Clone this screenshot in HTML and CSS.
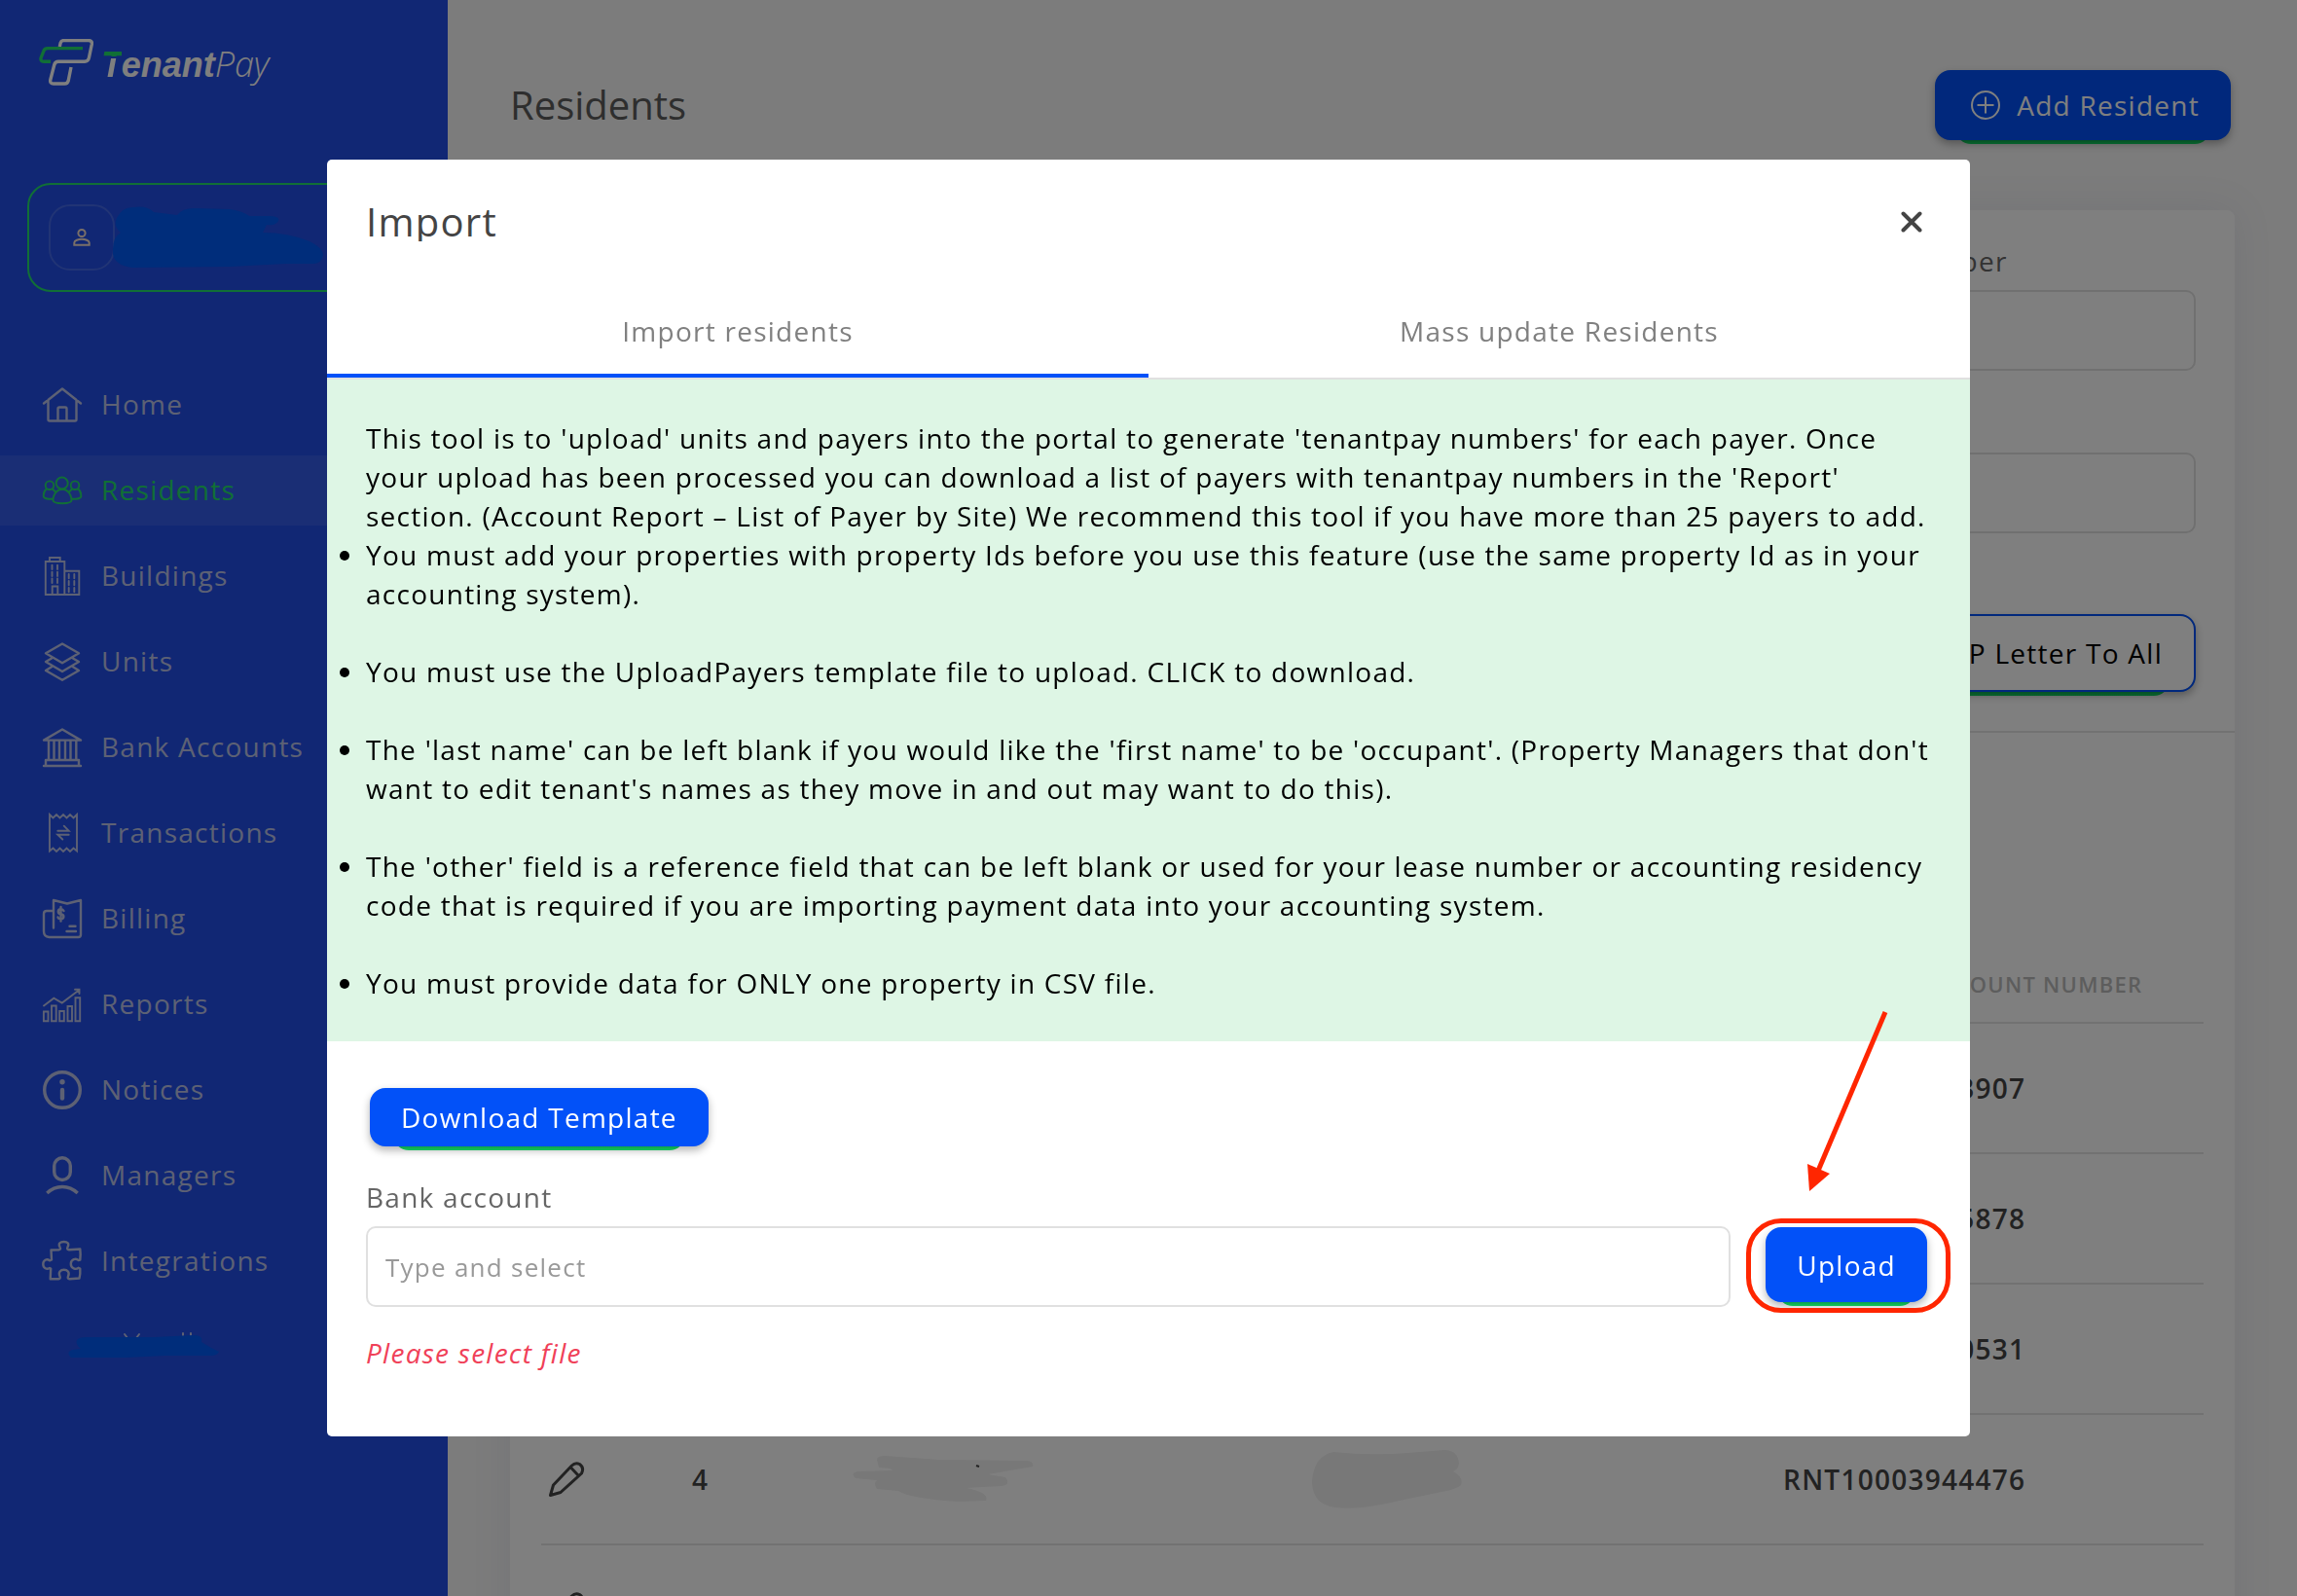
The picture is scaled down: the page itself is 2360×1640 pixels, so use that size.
FILE: index.html
```html
<!DOCTYPE html>
<html lang="en">
<head>
  <meta charset="utf-8">
  <meta name="viewport" content="width=device-width, initial-scale=1">
  <title>Residents - TenantPay</title>
  <link rel="stylesheet" href="styles.css">
</head>
<body>
  <div class="app">
    <aside class="sidebar">
      <a class="logo" href="#" aria-label="TenantPay">
        <svg class="logo-mark" viewBox="0 0 56 48" aria-hidden="true">
          <path class="logo-white" d="M21.3 8 22.2 4Q23 1.6 25.5 1.6H51Q55 1.6 54.3 5.5L51.4 19.5Q50.6 23.2 47 23.2H20Q16.6 23.2 15.8 26.5L11.8 42Q11 46 15 46H26.5Q29.4 46 30.2 43L33 29"/>
          <path class="logo-green" d="M45 9.6H9Q5.6 9.6 4.8 12.5L2.2 19.2Q1.2 23.2 5 23.2H12"/>
        </svg>
        <span class="logo-text"><b><span class="logo-t">T</span>enant</b><i>Pay</i></span>
      </a>

      <button class="account" type="button" aria-label="Account">
        <span class="avatar">
          <svg viewBox="0 0 20 20" aria-hidden="true"><circle cx="10" cy="5.5" r="3.6"/><path d="M2.3 17.8V15.5C2.3 13.2 6.5 11.8 10 11.8S17.700 13.2 17.700 15.5V17.800Z"/></svg>
        </span>
        <svg class="account-mark" viewBox="0 0 218 64" aria-hidden="true"><path d="M4 12Q10 0 22 1 34-1 42 6L66 9Q72 1 86 2L120 3Q134 5 140 10H160Q172 10 170 15T158 19L154 27Q180 27 202 36 216 43 216 50 214 60 204 59H178L120 62 20 63Q-2 60 0 44 0 32 8 27 0 20 4 12Z"/></svg>
      </button>

      <nav class="nav">
        <a href="#"><svg viewBox="0 0 40 40" aria-hidden="true"><path d="M1 18.500 20 3.500 39 18.500M5.500 15V35Q5.500 36.500 7 36.500H33Q34.500 36.500 34.500 35V15M15.500 36V24Q15.500 22.500 17 22.500H23Q24.500 22.500 24.500 24V36"/></svg><span>Home</span></a>
        <a href="#" class="active" aria-current="page"><svg class="thin" viewBox="0 0 40 40" aria-hidden="true"><circle cx="19.700" cy="12.500" r="6"/><circle cx="7" cy="14.700" r="4.300"/><circle cx="33" cy="14.700" r="4.300"/><path d="M20 18.700C14 18.700 10.500 25 10.500 30Q10.500 33.200 20 33.200T29.500 30C29.500 25 26 18.700 20 18.700ZM3.800 18.500C0 21 .8 24 .8 26.500Q2 29 10.300 28.800M10 18.500 12.500 21M36.200 18.500C40 21 39.200 24 39.200 26.500Q38 29 29.700 28.800M30 18.500 27.500 21"/></svg><span>Residents</span></a>
        <a href="#"><svg class="thin" viewBox="0 0 40 40" aria-hidden="true"><path d="M2.800 5H22.300V39H2.800ZM7 5V1H17.700V5M22.300 14.700H37.300V39H22.300M9.700 39V30.500H15.300V39M9.500 8.700V13M15 8.700V13M9.500 15.700V20M15 15.700V20M9.500 22.500V27M15 22.500V27M26.700 18V22.300M32.300 18V22.300M26.700 25V29.300M32.300 25V29.300M26.700 32V36.300M32.300 32V36.300"/></svg><span>Buildings</span></a>
        <a href="#"><svg viewBox="0 0 40 40" aria-hidden="true"><path d="M20 1.500 37 11.300 20 21.300 3 11.300ZM9 16.500 3 20 20 30 37 20 31 16.500M9 25.300 3 29 20 38.700 37 29 31 25.300"/></svg><span>Units</span></a>
        <a href="#"><svg viewBox="0 0 40 40" aria-hidden="true"><path d="M1 12.600 20 1.500 39 12.600ZM6 13V32M11.500 13V32M17 13V32M23 13V32M28.500 13V32M34.300 13V32M3 38V33H37V38M1 39H39"/></svg><span>Bank Accounts</span></a>
        <a href="#"><svg class="thin" viewBox="0 0 40 40" aria-hidden="true"><path d="M7 38.500V1L10.500 4.500 14 1 17.500 4.500 21 1 24.500 4.500 28 1 31.500 4.500 35 1V38.500L31.500 35.500 28 39 24.500 35.500 21 39 17.500 35.500 14 39 10.500 35.500ZM15.300 17.700H26.700L21.700 12.700M26.700 21.700H15.300L20.300 26.500"/></svg><span>Transactions</span></a>
        <a href="#"><svg viewBox="0 0 40 40" aria-hidden="true"><path d="M11 29.500V1L25 4.500 39 1V36.500Q39 39 36.500 39H6.500Q1 38.500 1 33V15Q1 12 4 12H11M27.500 27.700H33.500M24.500 33H34M21.500 12Q20.500 10.300 18.500 10.300 15.700 10.500 15.800 12.800 16 15 18.500 15.300 21.300 15.700 21.400 18 21.300 20.300 18.500 20.500 16 20.300 15.500 18.500M18.500 8V22.500"/></svg><span>Billing</span></a>
        <a href="#"><svg class="thin" viewBox="0 0 40 40" aria-hidden="true"><path d="M1 21.500 11.300 13.700 19.700 18.500 37 5.500M33 4.700H37.500V9M.9 27.500H5.500V37.300H.9ZM9 21.500H13.700V37.300H9ZM17.200 27H21.800V37.300H17.200ZM25.500 22H30V37.300H25.500ZM33.500 13.300H38.200V37.300H33.500Z"/></svg><span>Reports</span></a>
        <a href="#"><svg viewBox="0 0 40 40" aria-hidden="true"><circle class="bold" cx="20" cy="20" r="18.300"/><circle class="fill" cx="20" cy="11.700" r="2.700"/><path class="heavy" d="M20 20V28.500"/></svg><span>Notices</span></a>
        <a href="#"><svg viewBox="0 0 40 40" aria-hidden="true"><rect class="bold" x="11.700" y="1.800" width="16.600" height="22.700" rx="8.300"/><path class="bold" d="M4.300 38Q11 31.500 20 31.500T35.700 38"/></svg><span>Managers</span></a>
        <a href="#"><svg viewBox="0 0 40 40" aria-hidden="true"><path d="M8.500 8.500 16.500 8.300Q19 8 17.500 5.500C15.500 1.500 18 0 21.600 0S27.500 1.500 25.500 5.500Q24.300 8 27 8.300L38.300 7.500Q39 13 38.300 18.500L36.500 19C34 16.500 28.800 18 28.800 22.800S34 29 36.500 26.800L38.300 27.500Q38.700 33 37.500 37.500L27.500 38.300Q25 38 26 35.500C28 31 25 28.800 21.700 28.800S15.500 31 17.500 35.500Q18.500 38 16 38.300L7.700 38.300 8.200 27.500 7 27C4 29 .3 27 .3 23S4 17 7 19.300L9 18.500Z"/></svg><span>Integrations</span></a>
        <a href="#" class="masked" aria-label="More"><svg class="nav-mark" viewBox="0 0 156 26" aria-hidden="true"><path class="nav-hint" d="M59 0 62 4M74 0 71 4M119-1V1M127-1V1"/><path d="M10 6Q12 3 20 3L90 3 130 1Q140 1 138 8L148 14 156 18Q154 22 148 22L100 22 60 24H4Q-2 18 6 16L14 15Q8 10 10 6Z"/></svg></a>
      </nav>
    </aside>

    <main class="main">
      <header class="page-head">
        <h1>Residents</h1>
        <button class="btn btn-add" type="button">
          <svg viewBox="0 0 30 30" aria-hidden="true"><circle cx="15" cy="15" r="14"/><path d="M15 6.500V23.500M6.500 15H23.500"/></svg>
          Add Resident
        </button>
      </header>

      <section class="card">
        <form class="filters">
          <div class="field"><label for="f-number">Phone Number</label><input id="f-number" type="text"></div>
          <div class="field"><input type="text" aria-label="Status"></div>
          <div class="actions"><button class="btn btn-outline" type="button">Send TP Letter To All</button></div>
        </form>

        <div class="table-wrap">
          <table>
            <colgroup><col class="c-edit"><col class="c-id"><col class="c-name"><col class="c-unit"><col></colgroup>
            <thead>
              <tr><th></th><th></th><th></th><th></th><th>TENANTPAY ACCOUNT NUMBER</th></tr>
            </thead>
            <tbody>
              <tr><td></td><td></td><td></td><td></td><td class="num">RNT10003943907</td></tr>
              <tr><td></td><td></td><td></td><td></td><td class="num">RNT10003945878</td></tr>
              <tr><td></td><td></td><td></td><td></td><td class="num">RNT10003940531</td></tr>
              <tr>
                <td><svg class="pencil" viewBox="0 0 36 36" aria-label="Edit"><path d="M1.500 34.500 4.500 24 23.500 4Q27 .5 31.500 2.500 36.500 6 33.500 12L12 31.500ZM22.500 6 30.500 14.500"/></svg></td>
                <td class="num">4</td>
                <td><svg class="mark" viewBox="0 0 188 48" aria-hidden="true"><path d="M26 4Q26 0 34 0L90 4 180 5Q188 6 186 11L140 19 158 22Q164 30 154 31L118 33Q142 38 138 46L110 47Q60 44 48 36L26 34Q22 28 26 25L4 23Q-2 18 6 16L42 15 40 13 28 12Z"/><path class="mark-hint" d="M128 10 131 11"/></svg></td>
                <td><svg class="mark mark-unit" viewBox="0 0 154 60" aria-hidden="true"><path d="M22 2Q60 6 98 3L136 0Q150 0 151 14 150 20 145 22 156 28 153 36 148 40 138 42L90 52Q50 62 24 59 0 56 0 32 2 6 22 2Z"/></svg></td>
                <td class="num">RNT10003944476</td>
              </tr>
              <tr>
                <td><svg class="pencil" viewBox="0 0 36 36" aria-label="Edit"><path d="M1.500 34.500 4.500 24 23.500 4Q27 .5 31.500 2.500 36.500 6 33.500 12L12 31.500ZM22.500 6 30.500 14.500"/></svg></td>
                <td></td><td></td><td></td><td></td>
              </tr>
            </tbody>
          </table>
        </div>
      </section>
    </main>
  </div>

  <div class="overlay">
    <section class="modal" role="dialog" aria-modal="true" aria-labelledby="modal-title">
      <header class="modal-head">
        <h2 id="modal-title">Import</h2>
        <button class="close" type="button" aria-label="Close">
          <svg viewBox="0 0 22 22" aria-hidden="true"><path d="M2.500 2.500 19.500 19.500M19.500 2.500 2.500 19.500"/></svg>
        </button>
      </header>
      <div class="tabs" role="tablist">
        <button class="tab selected" type="button" role="tab" aria-selected="true">Import residents</button>
        <button class="tab" type="button" role="tab" aria-selected="false">Mass update Residents</button>
      </div>
      <div class="info">
        <p>This tool is to 'upload' units and payers into the portal to generate 'tenantpay numbers' for each payer. Once your upload has been processed you can download a list of payers with tenantpay numbers in the 'Report' section. (Account Report – List of Payer by Site) We recommend this tool if you have more than 25 payers to add.</p>
        <ul>
          <li>You must add your properties with property Ids before you use this feature (use the same property Id as in your accounting system).</li>
          <li>You must use the UploadPayers template file to upload. CLICK to download.</li>
          <li>The 'last name' can be left blank if you would like the 'first name' to be 'occupant'. (Property Managers that don't want to edit tenant's names as they move in and out may want to do this).</li>
          <li>The 'other' field is a reference field that can be left blank or used for your lease number or accounting residency code that is required if you are importing payment data into your accounting system.</li>
          <li>You must provide data for ONLY one property in CSV file.</li>
        </ul>
      </div>
      <form class="upload-form">
        <button class="btn btn-download" type="button">Download Template</button>
        <div class="upload-row">
          <div class="field">
            <label for="bank">Bank account</label>
            <input id="bank" type="text" placeholder="Type and select">
          </div>
          <div class="upload-action">
            <button class="btn btn-upload" type="button">Upload</button>
            <svg class="arrow" viewBox="0 0 90 190" aria-hidden="true"><path class="arrow-line" d="M83 3 14 166"/><path class="arrow-head" d="M3 159 26 169 5 187Z"/></svg>
          </div>
        </div>
        <p class="error">Please select file</p>
      </form>
    </section>
  </div>
</body>
</html>
```

FILE: styles.css
```css
* { box-sizing: border-box; }

body {
  margin: 0;
  font: 28px/40px "Open Sans", "Noto Sans", sans-serif;
  letter-spacing: 0.045em;
  color: #444;
  background: #f8f8f8;
}

h1, h2, p, ul { margin: 0; padding: 0; font-weight: 400; }

button, input { font: inherit; letter-spacing: inherit; color: inherit; }

button { cursor: pointer; }

.app {
  display: flex;
  height: 100vh;
  overflow: hidden;
}

/* Sidebar */
.sidebar {
  flex: 0 0 460px;
  background: #224ee8;
}

.logo {
  display: flex;
  gap: 8px;
  padding: 40px 40px 0;
  height: 188px;
  color: #fff;
  text-decoration: none;
}

.logo-mark { width: 56px; height: 48px; }
.logo-mark path { fill: none; stroke-width: 3.4; }
.logo-white { stroke: #fff; }
.logo-green { stroke: #22de6c; }

.logo-text {
  font: italic 36px/52px "Liberation Sans", Arial, sans-serif;
  letter-spacing: 0;
}

.logo-text b { font-weight: 700; }
.logo-text i { font-family: "Open Sans", sans-serif; font-weight: 300; }

.logo-t {
  color: transparent;
  background: linear-gradient(#22de6c 12px, transparent 12px, transparent 14px, #fff 14px);
  -webkit-background-clip: text;
  background-clip: text;
}

.account {
  display: flex;
  align-items: center;
  width: 404px;
  height: 112px;
  margin: 0 28px;
  padding: 0 20px;
  border: 2px solid #22de6c;
  border-radius: 24px;
  background: none;
}

.avatar {
  display: grid;
  place-items: center;
  flex: 0 0 68px;
  height: 68px;
  border: 2px solid rgba(255, 255, 255, 0.15);
  border-radius: 22px;
}

.avatar svg { width: 20px; height: 20px; fill: none; stroke: #f4dfd0; stroke-width: 2; }

.account-mark { width: 218px; height: 64px; margin-left: -2px; fill: #005af6; }

.nav { display: grid; gap: 16px; padding-top: 80px; }

.nav a {
  display: flex;
  align-items: center;
  gap: 20px;
  height: 72px;
  padding: 0 44px;
  color: #bac2e8;
  text-decoration: none;
}

.nav a.active { color: #22de6c; background: rgba(255, 255, 255, 0.09); }

.nav span { padding-bottom: 2px; }

.nav svg {
  flex: none;
  width: 40px;
  height: 40px;
  overflow: visible;
  fill: none;
  stroke: currentColor;
  stroke-width: 2.4;
  stroke-linejoin: round;
  stroke-linecap: round;
}

.nav svg.thin { stroke-width: 1.9; stroke-linejoin: miter; }
.nav .bold { stroke-width: 3.4; stroke-linecap: butt; }
.nav .heavy { stroke-width: 4.4; }
.nav .fill { fill: currentColor; stroke: none; }
.nav a.masked { padding-left: 69px; }
.nav svg.nav-mark { width: 156px; height: 26px; fill: #005af6; stroke: none; }
.nav .nav-hint { stroke: #bac2e8; stroke-width: 2; }

/* Main area */
.main { flex: 1; min-width: 0; padding: 72px 64px 0; }

.page-head {
  display: flex;
  justify-content: space-between;
  align-items: center;
  height: 72px;
  margin: 0 4px 72px 0;
}

h1 { font-size: 40px; line-height: 56px; font-weight: 500; letter-spacing: 0; color: #5c5c5c; }

.btn {
  position: relative;
  padding: 0 32px;
  border: 0;
  border-radius: 16px;
  color: #fff;
  background: #0251f8;
  box-shadow: 0 4px 8px rgba(0, 0, 0, 0.3);
  white-space: nowrap;
}

/* Green strip showing under the lower edge */
.btn::after {
  content: "";
  position: absolute;
  left: 7%;
  right: 7%;
  bottom: -4px;
  height: 16px;
  border-radius: 0 0 16px 16px;
  background: linear-gradient(#0ea04a 12px, #10c45c 16px);
  clip-path: inset(12px 0 0 0);
}

.btn-add {
  display: flex;
  align-items: center;
  gap: 17px;
  height: 72px;
  padding-left: 37px;
}

.btn-add svg { width: 30px; height: 30px; fill: none; stroke: currentColor; stroke-width: 2; }

.card {
  margin-bottom: 64px;
  border-radius: 8px;
  background: #fff;
  box-shadow: 0 0 40px rgba(90, 100, 160, 0.1);
}

.filters {
  display: grid;
  grid-template-columns: repeat(4, 1fr);
  gap: 34px 20px;
  padding: 32px 40px 40px;
  border-bottom: 2px solid #e4e4e4;
}

.filters .field { grid-column: 4; }

.field {
  display: flex;
  flex-direction: column;
  justify-content: flex-end;
  gap: 10px;
  min-height: 133px;
}

.field label { color: #666; }

.field input {
  width: 100%;
  height: 83px;
  padding: 0 18px;
  border: 2px solid #e0e0e0;
  border-radius: 10px;
  background: #fff;
  font-size: 26px;
  outline: 0;
}

.field input::placeholder { color: #999; opacity: 1; }

.actions {
  grid-column: 1 / -1;
  display: flex;
  justify-content: flex-end;
  padding-top: 49px;
}

.btn-outline {
  height: 80px;
  border: 2px solid #0251f8;
  color: #000;
  background: #fff;
}

.btn-outline::after { bottom: -6px; }

.table-wrap { padding: 218px 32px 0; }

table { width: 100%; table-layout: fixed; border-collapse: collapse; }
.c-edit { width: 155px; }
.c-id { width: 164px; }
.c-name { width: 473px; }
.c-unit { width: 484px; }

th, td { padding: 0; text-align: left; border-bottom: 2px solid #e4e4e4; }
th { height: 80px; font-size: 22px; font-weight: 600; color: #bbb; }
td { height: 134px; }
td:first-child, th:first-child { padding-left: 8px; }
.num { font-weight: 600; }

td svg { display: block; overflow: visible; }
.pencil { width: 36px; height: 36px; fill: none; stroke: #444; stroke-width: 3; stroke-linejoin: round; }
.mark { width: 188px; height: 48px; fill: #f0f0f0; }
.mark-unit { width: 154px; height: 60px; }
.mark-hint { stroke: #444; stroke-width: 2; }

/* Import dialog */
.overlay {
  position: fixed;
  inset: 0;
  display: flex;
  align-items: center;
  justify-content: center;
  background: rgba(0, 0, 0, 0.5);
}

.modal {
  width: calc(100% - 64px);
  max-width: 1688px;
  border-radius: 5px;
  background: #fff;
}

.modal-head {
  display: flex;
  justify-content: space-between;
  padding: 44px 48px 44px 40px;
}

.modal-head h2 { font-size: 40px; line-height: 40px; overflow: hidden; }

.close {
  display: grid;
  place-items: center;
  width: 24px;
  height: 40px;
  padding: 0;
  border: 0;
  background: none;
}

.close svg { width: 22px; height: 22px; fill: none; stroke: #444; stroke-width: 4; stroke-linecap: round; }

.tabs { display: flex; border-bottom: 2px solid #e0e0e0; }

.tab {
  flex: 1;
  height: 96px;
  padding: 4px 0 0;
  border: 0;
  border-bottom: 4px solid transparent;
  color: #808080;
  background: none;
}

.tab.selected { border-color: #0251f8; }

.info { padding: 40px; color: #000; background: #def6e5; }
.info li + li { margin-top: 40px; }

.upload-form { padding: 48px 44px 66px 40px; }
.btn-download { height: 60px; margin-left: 4px; display: block; }
.upload-row { display: flex; gap: 36px; align-items: flex-end; margin-top: 32px; }
.upload-row .field { flex: 1; }
.upload-action { position: relative; margin-bottom: 5px; }
.btn-upload { height: 77px; display: block; }

/* Red highlight around the upload button */
.upload-action::after {
  content: "";
  position: absolute;
  inset: -9px -24px -11px -20px;
  border: 5px solid #ff2600;
  border-radius: 36px;
  pointer-events: none;
}

.arrow { position: absolute; left: 40px; top: -224px; width: 90px; height: 190px; }
.arrow-line { fill: none; stroke: #ff2600; stroke-width: 5; }
.arrow-head { fill: #ff2600; }

.error { margin-top: 27px; font-style: italic; color: #f04058; }
```
